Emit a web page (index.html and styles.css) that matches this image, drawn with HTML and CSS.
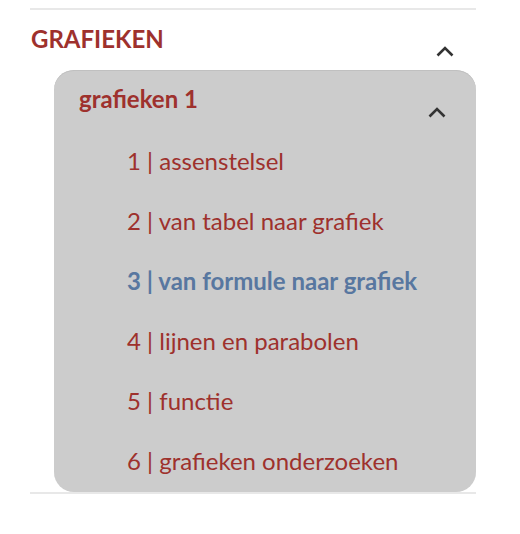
FILE: index.html
```html
<!DOCTYPE html>
<html lang="nl">
<head>
<meta charset="utf-8">
<title>Grafieken</title>
<link rel="stylesheet" href="styles.css">
</head>
<body>
<section class="section">
  <div class="section-head">
    <h2 class="section-title">GRAFIEKEN</h2>
    <svg class="chev chev-outer" width="18" height="11" viewBox="0 0 18 11"><path d="M1.5 9.5 L9 2 L16.5 9.5" fill="none" stroke="#333" stroke-width="2.6"/></svg>
  </div>
  <div class="box">
    <div class="box-head">
      <h3 class="box-title">grafieken 1</h3>
      <svg class="chev chev-inner" width="18" height="11" viewBox="0 0 18 11"><path d="M1.5 9.5 L9 2 L16.5 9.5" fill="none" stroke="#333" stroke-width="2.6"/></svg>
    </div>
    <ul class="items">
      <li class="item">1 | assenstelsel</li>
      <li class="item">2 | van tabel naar grafiek</li>
      <li class="item active">3 | van formule naar grafiek</li>
      <li class="item">4 | lijnen en parabolen</li>
      <li class="item">5 | functie</li>
      <li class="item">6 | grafieken onderzoeken</li>
    </ul>
  </div>
</section>
</body>
</html>
```
FILE: styles.css
```css
html, body {
  margin: 0;
  padding: 0;
  background: #ffffff;
  font-family: Lato, "Open Sans", sans-serif;
}
.section {
  margin: 8px 0 0 30px;
  width: 446px;
  border-top: 2px solid #e8e8e8;
  border-bottom: 2px solid #e8e8e8;
}
.section-head {
  display: flex;
  justify-content: space-between;
  align-items: flex-start;
  height: 60px;
}
.section-title {
  margin: 0;
  padding-top: 15px;
  padding-left: 1px;
  font-size: 24px;
  line-height: 28px;
  font-weight: 700;
  color: #9e312d;
}
.chev {
  display: block;
}
.chev-outer {
  margin-top: 36px;
  margin-right: 22px;
}
.box {
  margin-left: 24px;
  background: #cccccc;
  border-radius: 20px;
  box-shadow: inset 0 1px 0 #c0c0c0;
}
.box-head {
  display: flex;
  justify-content: space-between;
  align-items: flex-start;
  height: 61px;
}
.box-title {
  margin: 0;
  padding-top: 15px;
  padding-left: 25px;
  font-size: 24px;
  line-height: 28px;
  font-weight: 700;
  color: #9e312d;
}
.chev-inner {
  margin-top: 37px;
  margin-right: 30px;
}
.items {
  list-style: none;
  margin: 0;
  padding: 0 0 1px 73px;
}
.item {
  font-size: 24px;
  line-height: 60px;
  color: #9e312d;
}
.item.active {
  color: #5877a0;
  font-weight: 700;
}
```
